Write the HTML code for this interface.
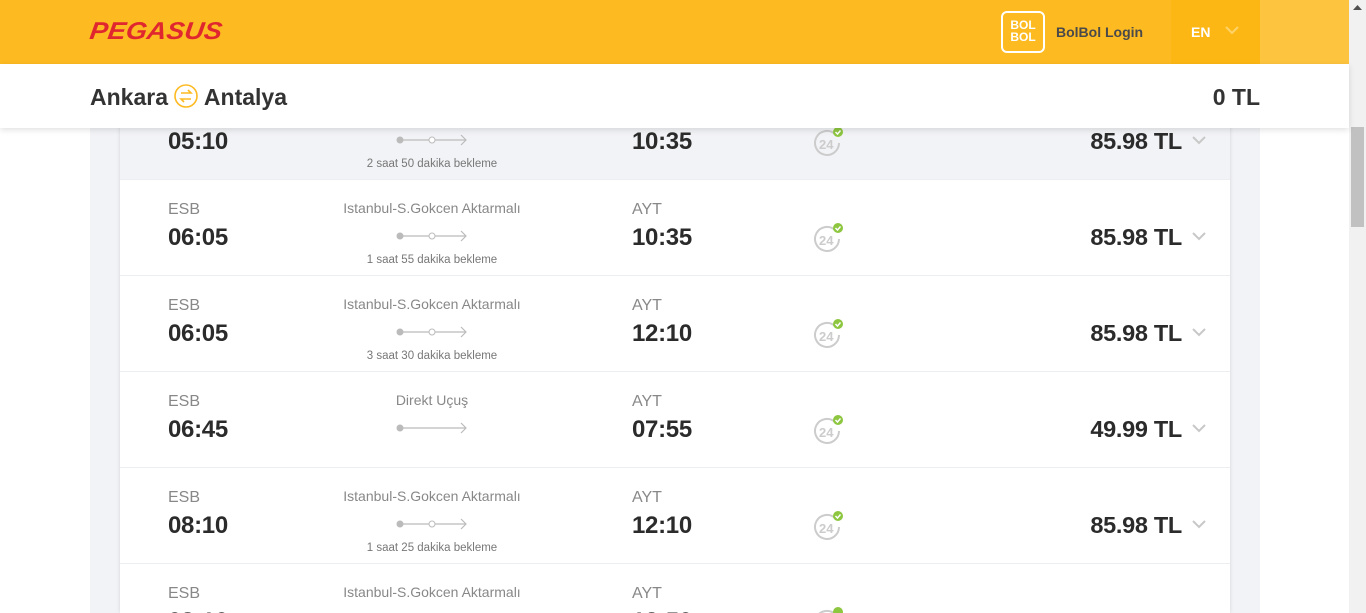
<!DOCTYPE html>
<html><head><meta charset="utf-8"><style>
*{margin:0;padding:0;box-sizing:border-box}
html,body{width:1366px;height:613px;overflow:hidden}
body{background:#fff;font-family:"Liberation Sans",sans-serif;position:relative}
.top{position:absolute;left:0;top:0;width:1349px;height:64px;background:#fdba21}
.topr{position:absolute;left:1260px;top:0;width:89px;height:64px;background:#fdc43f}
.en{position:absolute;left:1171px;top:0;width:89px;height:64px;background:#fdb714;color:#fff;font-weight:bold;font-size:14px}
.logo{position:absolute;left:90px;top:16px;font-size:27px;font-weight:900;font-style:italic;color:#e0262f;letter-spacing:0px;transform:skewX(-8deg) scaleY(0.9)}
.bol{position:absolute;left:1001px;top:11px;width:44px;height:42px;border:2px solid #fff;border-radius:6px;color:#fff;font-weight:bold;font-size:12px;line-height:12px;text-align:center;padding-top:6px}
.bl{position:absolute;left:1056px;top:24px;font-size:14px;font-weight:bold;color:#4a4a4a}
.sub{position:absolute;left:0;top:64px;width:1349px;height:64px;background:#fff;box-shadow:0 2px 6px rgba(0,0,0,.12);z-index:5}
.route{position:absolute;left:90px;top:84px;font-size:23px;font-weight:bold;color:#333}
.tl{position:absolute;right:106px;top:84px;font-size:23px;font-weight:bold;color:#333}
.col{position:absolute;left:90px;top:128px;width:1170px;height:485px;background:#f2f3f6}
.card{position:absolute;left:120px;top:84px;width:1110px;height:529px;background:#fff;box-shadow:0 0 4px rgba(0,0,0,.12)}
.row{position:absolute;left:120px;width:1110px;height:96px;border-bottom:1px solid #eceef1;background:#fff;overflow:hidden}
.row.g{background:#f2f3f6}
.code{position:absolute;font-size:16px;color:#888;top:21px}
.time{position:absolute;font-size:24px;font-weight:bold;color:#2b2b2b;top:44px;letter-spacing:-0.3px}
.via{position:absolute;left:212px;width:200px;text-align:center;top:20px;font-size:14px;color:#888}
.wait{position:absolute;left:212px;width:200px;text-align:center;top:74px;font-size:11.5px;color:#777}
.line{position:absolute;left:276px;top:50px}
.ic{position:absolute;left:692px;top:42px}
.price{position:absolute;right:48px;top:44px;font-size:23.5px;font-weight:bold;color:#2b2b2b;letter-spacing:-0.3px}
.chev{position:absolute;right:24px;top:52px}
.sb{position:absolute;left:1349px;top:0;width:17px;height:613px;background:#f1f1f1}
.th{position:absolute;left:1351px;top:127px;width:13px;height:100px;background:#c1c1c1}
</style></head><body>
<div class="top"></div><div class="topr"></div>
<div class="logo">PEGASUS</div>
<div class="bol">BOL<br>BOL</div>
<div class="bl">BolBol Login</div>
<div class="en"><span style="position:absolute;left:20px;top:24px">EN</span><svg style="position:absolute;left:54px;top:26px" width="14" height="9"><path d="M1 1l6 6 6-6" stroke="#fdd36a" stroke-width="2" fill="none"/></svg></div>
<div class="sub"></div>
<div class="route" style="z-index:6">Ankara <svg width="24" height="24" viewBox="0 0 24 24" style="vertical-align:-3px"><circle cx="12" cy="12" r="11" stroke="#fdba21" stroke-width="1.6" fill="none"/><path d="M7 9h10l-3-3M17 15H7l3 3" stroke="#fdba21" stroke-width="1.6" fill="none"/></svg> Antalya</div>
<div class="tl" style="z-index:6">0 TL</div>
<div class="col"></div>
<div class="card"></div>

<div class="row g" style="top:84px">
<div class="code" style="left:48px">ESB</div><div class="time" style="left:48px">05:10</div>
<svg class="line" width="74" height="12"><circle cx="4" cy="6" r="3.5" fill="#bbb"/><line x1="4" y1="6" x2="70" y2="6" stroke="#bbb" stroke-width="1.2"/><circle cx="36" cy="6" r="3" fill="#fff" stroke="#bbb"/><path d="M65 1l5 5-5 5" stroke="#bbb" fill="none" stroke-width="1.2"/></svg>
<div class="wait">2 saat 50 dakika bekleme</div>
<div class="code" style="left:512px">AYT</div><div class="time" style="left:512px">10:35</div>
<svg class="ic" width="34" height="34" viewBox="0 0 34 34"><path d="M27 17a12 12 0 1 1-4-9" stroke="#ccc" stroke-width="2" fill="none"/><text x="7" y="23" font-size="13" font-family="Liberation Sans" fill="#ccc" font-weight="bold">24</text><circle cx="26" cy="6" r="5" fill="#8dc63f"/><path d="M23.5 6l2 2 3-3.5" stroke="#fff" stroke-width="1.5" fill="none"/></svg>
<div class="price">85.98 TL</div>
<svg class="chev" width="14" height="9"><path d="M1 1l6 6 6-6" stroke="#c8c8c8" stroke-width="2" fill="none"/></svg>
</div>

<div class="row" style="top:180px">
<div class="code" style="left:48px">ESB</div><div class="time" style="left:48px">06:05</div>
<div class="via">Istanbul-S.Gokcen Aktarmalı</div>
<svg class="line" width="74" height="12"><circle cx="4" cy="6" r="3.5" fill="#bbb"/><line x1="4" y1="6" x2="70" y2="6" stroke="#bbb" stroke-width="1.2"/><circle cx="36" cy="6" r="3" fill="#fff" stroke="#bbb"/><path d="M65 1l5 5-5 5" stroke="#bbb" fill="none" stroke-width="1.2"/></svg>
<div class="wait">1 saat 55 dakika bekleme</div>
<div class="code" style="left:512px">AYT</div><div class="time" style="left:512px">10:35</div>
<svg class="ic" width="34" height="34" viewBox="0 0 34 34"><path d="M27 17a12 12 0 1 1-4-9" stroke="#ccc" stroke-width="2" fill="none"/><text x="7" y="23" font-size="13" font-family="Liberation Sans" fill="#ccc" font-weight="bold">24</text><circle cx="26" cy="6" r="5" fill="#8dc63f"/><path d="M23.5 6l2 2 3-3.5" stroke="#fff" stroke-width="1.5" fill="none"/></svg>
<div class="price">85.98 TL</div>
<svg class="chev" width="14" height="9"><path d="M1 1l6 6 6-6" stroke="#c8c8c8" stroke-width="2" fill="none"/></svg>
</div>

<div class="row" style="top:276px">
<div class="code" style="left:48px">ESB</div><div class="time" style="left:48px">06:05</div>
<div class="via">Istanbul-S.Gokcen Aktarmalı</div>
<svg class="line" width="74" height="12"><circle cx="4" cy="6" r="3.5" fill="#bbb"/><line x1="4" y1="6" x2="70" y2="6" stroke="#bbb" stroke-width="1.2"/><circle cx="36" cy="6" r="3" fill="#fff" stroke="#bbb"/><path d="M65 1l5 5-5 5" stroke="#bbb" fill="none" stroke-width="1.2"/></svg>
<div class="wait">3 saat 30 dakika bekleme</div>
<div class="code" style="left:512px">AYT</div><div class="time" style="left:512px">12:10</div>
<svg class="ic" width="34" height="34" viewBox="0 0 34 34"><path d="M27 17a12 12 0 1 1-4-9" stroke="#ccc" stroke-width="2" fill="none"/><text x="7" y="23" font-size="13" font-family="Liberation Sans" fill="#ccc" font-weight="bold">24</text><circle cx="26" cy="6" r="5" fill="#8dc63f"/><path d="M23.5 6l2 2 3-3.5" stroke="#fff" stroke-width="1.5" fill="none"/></svg>
<div class="price">85.98 TL</div>
<svg class="chev" width="14" height="9"><path d="M1 1l6 6 6-6" stroke="#c8c8c8" stroke-width="2" fill="none"/></svg>
</div>

<div class="row" style="top:372px">
<div class="code" style="left:48px">ESB</div><div class="time" style="left:48px">06:45</div>
<div class="via">Direkt Uçuş</div>
<svg class="line" width="74" height="12"><circle cx="4" cy="6" r="3.5" fill="#bbb"/><line x1="4" y1="6" x2="70" y2="6" stroke="#bbb" stroke-width="1.2"/><path d="M65 1l5 5-5 5" stroke="#bbb" fill="none" stroke-width="1.2"/></svg>
<div class="code" style="left:512px">AYT</div><div class="time" style="left:512px">07:55</div>
<svg class="ic" width="34" height="34" viewBox="0 0 34 34"><path d="M27 17a12 12 0 1 1-4-9" stroke="#ccc" stroke-width="2" fill="none"/><text x="7" y="23" font-size="13" font-family="Liberation Sans" fill="#ccc" font-weight="bold">24</text><circle cx="26" cy="6" r="5" fill="#8dc63f"/><path d="M23.5 6l2 2 3-3.5" stroke="#fff" stroke-width="1.5" fill="none"/></svg>
<div class="price">49.99 TL</div>
<svg class="chev" width="14" height="9"><path d="M1 1l6 6 6-6" stroke="#c8c8c8" stroke-width="2" fill="none"/></svg>
</div>

<div class="row" style="top:468px">
<div class="code" style="left:48px">ESB</div><div class="time" style="left:48px">08:10</div>
<div class="via">Istanbul-S.Gokcen Aktarmalı</div>
<svg class="line" width="74" height="12"><circle cx="4" cy="6" r="3.5" fill="#bbb"/><line x1="4" y1="6" x2="70" y2="6" stroke="#bbb" stroke-width="1.2"/><circle cx="36" cy="6" r="3" fill="#fff" stroke="#bbb"/><path d="M65 1l5 5-5 5" stroke="#bbb" fill="none" stroke-width="1.2"/></svg>
<div class="wait">1 saat 25 dakika bekleme</div>
<div class="code" style="left:512px">AYT</div><div class="time" style="left:512px">12:10</div>
<svg class="ic" width="34" height="34" viewBox="0 0 34 34"><path d="M27 17a12 12 0 1 1-4-9" stroke="#ccc" stroke-width="2" fill="none"/><text x="7" y="23" font-size="13" font-family="Liberation Sans" fill="#ccc" font-weight="bold">24</text><circle cx="26" cy="6" r="5" fill="#8dc63f"/><path d="M23.5 6l2 2 3-3.5" stroke="#fff" stroke-width="1.5" fill="none"/></svg>
<div class="price">85.98 TL</div>
<svg class="chev" width="14" height="9"><path d="M1 1l6 6 6-6" stroke="#c8c8c8" stroke-width="2" fill="none"/></svg>
</div>

<div class="row" style="top:564px;height:49px;border-bottom:none">
<div class="code" style="left:48px">ESB</div><div class="time" style="left:48px">08:10</div>
<div class="via">Istanbul-S.Gokcen Aktarmalı</div>
<div class="code" style="left:512px">AYT</div><div class="time" style="left:512px">12:50</div>
<svg class="ic" width="34" height="34" viewBox="0 0 34 34"><path d="M27 17a12 12 0 1 1-4-9" stroke="#ccc" stroke-width="2" fill="none"/><circle cx="26" cy="6" r="5" fill="#8dc63f"/></svg>
<div class="price">85.98 TL</div>
</div>

<div class="sb"></div><div class="th"></div>
<svg style="position:absolute;left:1353px;top:5px" width="9" height="5"><path d="M0 5L4.5 0 9 5z" fill="#505050"/></svg>
</body></html>
